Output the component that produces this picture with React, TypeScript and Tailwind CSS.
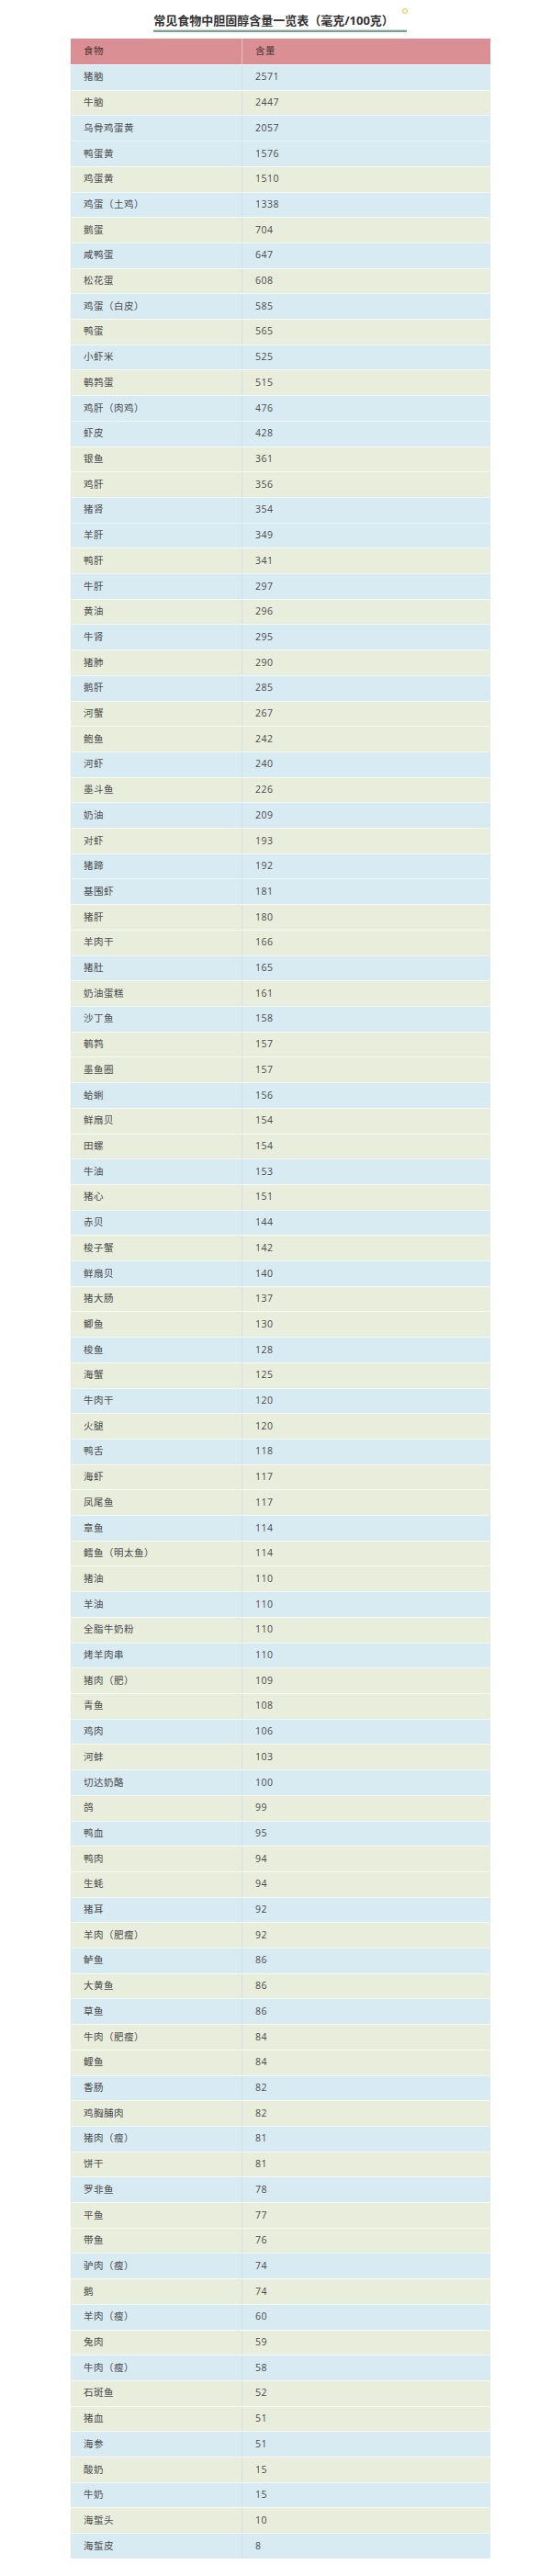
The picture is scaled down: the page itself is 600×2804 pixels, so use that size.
import React from "react";

type Row = [string, string, "B" | "G"];

const rows: Row[] = [
  ["猪脑", "2571", "B"],
  ["牛脑", "2447", "G"],
  ["乌骨鸡蛋黄", "2057", "B"],
  ["鸭蛋黄", "1576", "B"],
  ["鸡蛋黄", "1510", "G"],
  ["鸡蛋（土鸡）", "1338", "B"],
  ["鹅蛋", "704", "G"],
  ["咸鸭蛋", "647", "B"],
  ["松花蛋", "608", "G"],
  ["鸡蛋（白皮）", "585", "B"],
  ["鸭蛋", "565", "G"],
  ["小虾米", "525", "B"],
  ["鹌鹑蛋", "515", "G"],
  ["鸡肝（肉鸡）", "476", "B"],
  ["虾皮", "428", "B"],
  ["银鱼", "361", "G"],
  ["鸡肝", "356", "G"],
  ["猪肾", "354", "B"],
  ["羊肝", "349", "B"],
  ["鸭肝", "341", "G"],
  ["牛肝", "297", "B"],
  ["黄油", "296", "G"],
  ["牛肾", "295", "B"],
  ["猪肺", "290", "G"],
  ["鹅肝", "285", "B"],
  ["河蟹", "267", "G"],
  ["鲍鱼", "242", "G"],
  ["河虾", "240", "B"],
  ["墨斗鱼", "226", "G"],
  ["奶油", "209", "B"],
  ["对虾", "193", "G"],
  ["猪蹄", "192", "B"],
  ["基围虾", "181", "B"],
  ["猪肝", "180", "G"],
  ["羊肉干", "166", "G"],
  ["猪肚", "165", "B"],
  ["奶油蛋糕", "161", "G"],
  ["沙丁鱼", "158", "B"],
  ["鹌鹑", "157", "G"],
  ["墨鱼圈", "157", "G"],
  ["蛤蜊", "156", "B"],
  ["鲜扇贝", "154", "G"],
  ["田螺", "154", "G"],
  ["牛油", "153", "B"],
  ["猪心", "151", "G"],
  ["赤贝", "144", "B"],
  ["梭子蟹", "142", "G"],
  ["鲜扇贝", "140", "B"],
  ["猪大肠", "137", "G"],
  ["鲫鱼", "130", "G"],
  ["梭鱼", "128", "B"],
  ["海蟹", "125", "G"],
  ["牛肉干", "120", "B"],
  ["火腿", "120", "G"],
  ["鸭舌", "118", "B"],
  ["海虾", "117", "G"],
  ["凤尾鱼", "117", "G"],
  ["章鱼", "114", "B"],
  ["鳕鱼（明太鱼）", "114", "G"],
  ["猪油", "110", "G"],
  ["羊油", "110", "B"],
  ["全脂牛奶粉", "110", "G"],
  ["烤羊肉串", "110", "B"],
  ["猪肉（肥）", "109", "G"],
  ["青鱼", "108", "G"],
  ["鸡肉", "106", "B"],
  ["河蚌", "103", "G"],
  ["切达奶酪", "100", "B"],
  ["鸽", "99", "G"],
  ["鸭血", "95", "B"],
  ["鸭肉", "94", "G"],
  ["生蚝", "94", "G"],
  ["猪耳", "92", "B"],
  ["羊肉（肥瘦）", "92", "G"],
  ["鲈鱼", "86", "B"],
  ["大黄鱼", "86", "G"],
  ["草鱼", "86", "B"],
  ["牛肉（肥瘦）", "84", "G"],
  ["鲤鱼", "84", "G"],
  ["香肠", "82", "B"],
  ["鸡胸脯肉", "82", "G"],
  ["猪肉（瘦）", "81", "B"],
  ["饼干", "81", "G"],
  ["罗非鱼", "78", "B"],
  ["平鱼", "77", "G"],
  ["带鱼", "76", "G"],
  ["驴肉（瘦）", "74", "B"],
  ["鹅", "74", "G"],
  ["羊肉（瘦）", "60", "B"],
  ["兔肉", "59", "G"],
  ["牛肉（瘦）", "58", "B"],
  ["石斑鱼", "52", "G"],
  ["猪血", "51", "G"],
  ["海参", "51", "B"],
  ["酸奶", "15", "G"],
  ["牛奶", "15", "B"],
  ["海蜇头", "10", "G"],
  ["海蜇皮", "8", "B"],
];

export default function App() {
  return (
    <div
      className="w-[600px] bg-white pb-[18px]"
      style={{ fontFamily: '"Open Sans", "Noto Sans CJK SC", sans-serif' }}
    >
      <div className="flex justify-center pt-[13px]">
        <div className="relative ml-[10px] w-fit pr-[14px]">
          <div className="h-[19px] whitespace-nowrap text-[13px] font-bold leading-[19px] text-[#333333]">
            常见食物中胆固醇含量一览表（毫克/100克）
          </div>
          <div className="absolute bottom-0 left-0 right-0">
            <div className="h-px bg-[#e0e27e]" />
            <div className="h-[2px] bg-[#6d9dcf]" />
          </div>
          <div className="h-[3px]" />
          <div className="absolute right-[-1px] top-[-4px] h-[6px] w-[6px] rounded-full border-[1.5px] border-[#f0c550] bg-[#fdf3cf]" />
        </div>
      </div>
      <div className="ml-[77px] mt-[6.7px] w-[457px] text-[10.5px] tracking-[0.5px]">
        <div className="flex h-[28.3px] items-center bg-[#d98f93] text-[#4b3434]">
          <div className="flex h-full w-[187px] items-center border-r border-[#ecc3c5] pl-[14px]">
            食物
          </div>
          <div className="flex h-full flex-1 items-center pl-[14px]">含量</div>
        </div>
        {rows.map(([name, val, c], i) => (
          <div
            key={i}
            className={
              "flex h-[27.71px] items-center border-t border-white/60 text-[#4a4a4a] " +
              (c === "B" ? "bg-[#d8ebf3]" : "bg-[#e8eddc]")
            }
          >
            <div className="flex h-full w-[187px] items-center border-r border-[#d3dfe2] pl-[14px]">
              {name}
            </div>
            <div className="flex h-full flex-1 items-center pl-[14px]">{val}</div>
          </div>
        ))}
      </div>
    </div>
  );
}
